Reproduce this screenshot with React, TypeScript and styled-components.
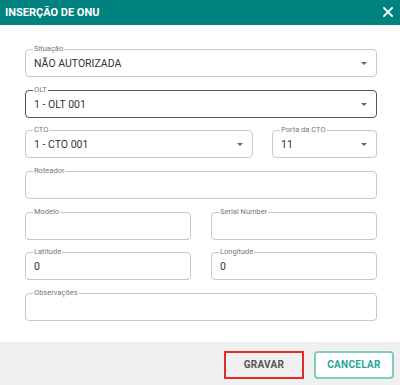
import React from 'react'
import styled, { createGlobalStyle } from 'styled-components'

const GlobalStyle = createGlobalStyle`
  html, body {
    margin: 0;
    padding: 0;
    background: #fff;
  }
  body {
    font-family: Roboto, 'Liberation Sans', sans-serif;
  }
`

type FieldProps = {
  label: string
  value?: string
  select?: boolean
  focused?: boolean
}

const Field = ({ label, value, select, focused }: FieldProps) => (
  <FieldBox $focused={focused}>
    <Legend>{label}</Legend>
    <Value>{value}</Value>
    {select && <Arrow />}
  </FieldBox>
)

export default function App() {
  return (
    <Modal>
      <GlobalStyle />
      <Header>
        <Title>INSERÇÃO DE ONU</Title>
        <CloseIcon viewBox="0 0 10 10">
          <path d="M1 1 L9 9 M9 1 L1 9" stroke="#fff" strokeWidth="1.8" strokeLinecap="square" />
        </CloseIcon>
      </Header>
      <Body>
        <Field label="Situação" value="NÃO AUTORIZADA" select />
        <Field label="OLT" value="1 - OLT 001" select focused />
        <Row $cols="1fr 105px" $gap={19}>
          <Field label="CTO" value="1 - CTO 001" select />
          <Field label="Porta da CTO" value="11" select />
        </Row>
        <Field label="Roteador" />
        <Row $cols="1fr 1fr" $gap={20}>
          <Field label="Modelo" />
          <Field label="Serial Number" />
        </Row>
        <Row $cols="1fr 1fr" $gap={20}>
          <Field label="Latitude" value="0" />
          <Field label="Longitude" value="0" />
        </Row>
        <Field label="Observações" />
      </Body>
      <Footer>
        <Button $variant="save">GRAVAR</Button>
        <Button $variant="cancel">CANCELAR</Button>
      </Footer>
    </Modal>
  )
}

const Modal = styled.div`
  width: 400px;
  height: 385px;
  display: flex;
  flex-direction: column;
  background: #fff;
  overflow: hidden;
`

const Header = styled.header`
  height: 25px;
  flex-shrink: 0;
  background: #008280;
  display: flex;
  align-items: center;
  justify-content: space-between;
  padding: 0 7px 0 5px;
  box-sizing: border-box;
`

const Title = styled.h1`
  margin: 0;
  color: #fff;
  font-size: 11px;
  font-weight: 700;
  letter-spacing: 0;
`

const CloseIcon = styled.svg`
  width: 10px;
  height: 10px;
  margin-top: -2px;
`

const Body = styled.main`
  flex-grow: 1;
  display: flex;
  flex-direction: column;
  gap: 12.7px;
  padding: 24px 23px 0 25px;
`

const Row = styled.div<{ $cols: string; $gap: number }>`
  display: grid;
  grid-template-columns: ${p => p.$cols};
  column-gap: ${p => p.$gap}px;
`

const FieldBox = styled.div<{ $focused?: boolean }>`
  position: relative;
  height: 28px;
  box-sizing: border-box;
  border: 1px solid ${p => (p.$focused ? '#555' : '#c8c8c8')};
  border-radius: 4px;
  display: flex;
  align-items: center;
  padding: 1px 8px 0 8px;
`

const Legend = styled.span`
  position: absolute;
  top: -6px;
  left: 7px;
  padding: 0 1px;
  background: #fff;
  color: #777;
  font-size: 7.5px;
  line-height: 10px;
`

const Value = styled.span`
  flex-grow: 1;
  color: #333;
  font-size: 10.5px;
`

const Arrow = styled.span`
  width: 0;
  height: 0;
  border-left: 3px solid transparent;
  border-right: 3px solid transparent;
  border-top: 3px solid #666;
  margin-right: 1px;
`

const Footer = styled.footer`
  height: 43px;
  flex-shrink: 0;
  background: #f0f0f0;
  display: flex;
  align-items: center;
  justify-content: flex-end;
  gap: 10px;
  padding: 0 6px 0 0;
  box-sizing: border-box;
`

const Button = styled.button<{ $variant: 'save' | 'cancel' }>`
  height: 28px;
  width: 80px;
  box-sizing: border-box;
  font-family: Roboto, 'Liberation Sans', sans-serif;
  font-size: 10px;
  font-weight: 700;
  letter-spacing: 0.3px;
  border-radius: ${p => (p.$variant === 'save' ? '0' : '4px')};
  background: ${p => (p.$variant === 'save' ? '#f0f0f0' : '#fff')};
  color: ${p => (p.$variant === 'save' ? '#555' : '#26a69a')};
  border: 2px solid ${p => (p.$variant === 'save' ? '#e52a2a' : '#7fcdc4')};
  margin-top: 2px;
`
